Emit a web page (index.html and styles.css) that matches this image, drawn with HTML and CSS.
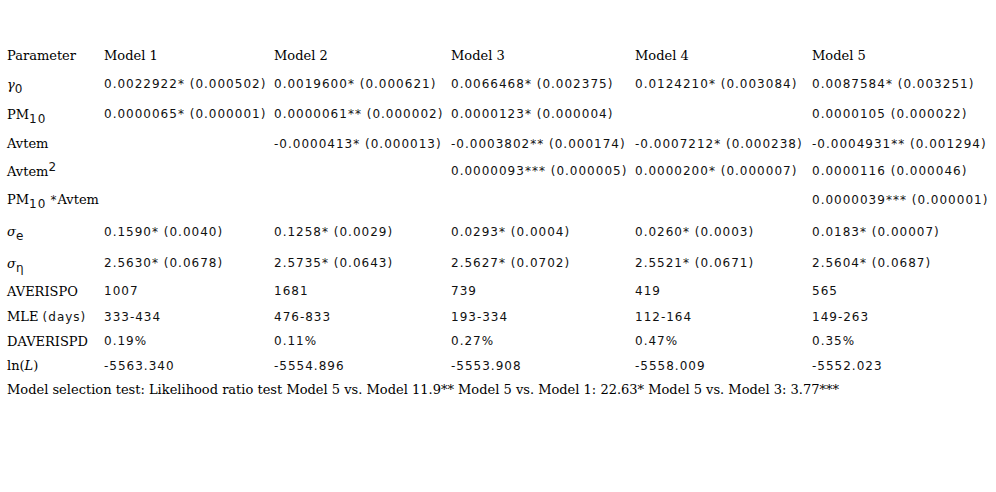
FILE: index.html
```html
<!DOCTYPE html>
<html>
<head>
<meta charset="utf-8">
<link rel="stylesheet" href="styles.css">
</head>
<body>
<table class="results">
  <colgroup>
    <col class="c0"><col class="c1"><col class="c2"><col class="c3"><col class="c4"><col class="c5">
  </colgroup>
  <tr class="r0"><td class="lbl">Parameter</td><td class="lbl">Model 1</td><td class="lbl">Model 2</td><td class="lbl">Model 3</td><td class="lbl">Model 4</td><td class="lbl">Model 5</td></tr>
  <tr class="r1"><td class="lbl"><span class="greek">γ</span><sub class="num">0</sub></td><td class="num">0.0022922* (0.000502)</td><td class="num">0.0019600* (0.000621)</td><td class="num">0.0066468* (0.002375)</td><td class="num">0.0124210* (0.003084)</td><td class="num">0.0087584* (0.003251)</td></tr>
  <tr class="r2"><td class="lbl">PM<sub class="num">10</sub></td><td class="num">0.0000065* (0.000001)</td><td class="num">0.0000061** (0.000002)</td><td class="num">0.0000123* (0.000004)</td><td class="num"></td><td class="num">0.0000105 (0.000022)</td></tr>
  <tr class="r3"><td class="lbl">Avtem</td><td class="num"></td><td class="num">-0.0000413* (0.000013)</td><td class="num">-0.0003802** (0.000174)</td><td class="num">-0.0007212* (0.000238)</td><td class="num">-0.0004931** (0.001294)</td></tr>
  <tr class="r4"><td class="lbl">Avtem<sup class="num">2</sup></td><td class="num"></td><td class="num"></td><td class="num">0.0000093*** (0.000005)</td><td class="num">0.0000200* (0.000007)</td><td class="num">0.0000116 (0.000046)</td></tr>
  <tr class="r5"><td class="lbl">PM<sub class="num">10</sub> <span class="num">*</span>Avtem</td><td class="num"></td><td class="num"></td><td class="num"></td><td class="num"></td><td class="num">0.0000039*** (0.000001)</td></tr>
  <tr class="r6"><td class="lbl"><span class="greek">σ</span><sub class="num">e</sub></td><td class="num">0.1590* (0.0040)</td><td class="num">0.1258* (0.0029)</td><td class="num">0.0293* (0.0004)</td><td class="num">0.0260* (0.0003)</td><td class="num">0.0183* (0.00007)</td></tr>
  <tr class="r7"><td class="lbl"><span class="greek">σ</span><sub class="num">η</sub></td><td class="num">2.5630* (0.0678)</td><td class="num">2.5735* (0.0643)</td><td class="num">2.5627* (0.0702)</td><td class="num">2.5521* (0.0671)</td><td class="num">2.5604* (0.0687)</td></tr>
  <tr class="r8"><td class="lbl">AVERISPO</td><td class="num">1007</td><td class="num">1681</td><td class="num">739</td><td class="num">419</td><td class="num">565</td></tr>
  <tr class="r9"><td class="lbl">MLE <span class="num">(days)</span></td><td class="num">333-434</td><td class="num">476-833</td><td class="num">193-334</td><td class="num">112-164</td><td class="num">149-263</td></tr>
  <tr class="r10"><td class="lbl">DAVERISPD</td><td class="num">0.19%</td><td class="num">0.11%</td><td class="num">0.27%</td><td class="num">0.47%</td><td class="num">0.35%</td></tr>
  <tr class="r11"><td class="lbl">ln(<i>L</i>)</td><td class="num">-5563.340</td><td class="num">-5554.896</td><td class="num">-5553.908</td><td class="num">-5558.009</td><td class="num">-5552.023</td></tr>
</table>
<p class="note">Model selection test: Likelihood ratio test Model 5 vs. Model 11.9** Model 5 vs. Model 1: 22.63* Model 5 vs. Model 3: 3.77***</p>
</body>
</html>
```
FILE: styles.css
```css
html, body {
  margin: 0;
  padding: 0;
  background: #ffffff;
  color: #000000;
}
body {
  padding: 41px 0 0 7px;
  font-family: "DejaVu Serif", serif;
  font-size: 13px;
}
.results {
  border-collapse: collapse;
  border-spacing: 0;
  table-layout: fixed;
}
.results td {
  padding: 0;
  vertical-align: middle;
  white-space: nowrap;
  text-align: left;
}
.c0 { width: 97px; }
.c1 { width: 170px; }
.c2 { width: 177px; }
.c3 { width: 184px; }
.c4 { width: 177px; }
.c5 { width: 180px; }
.lbl {
  font-family: "DejaVu Serif", serif;
  font-size: 13px;
  letter-spacing: 0;
}
.num {
  font-family: "DejaVu Sans", sans-serif;
  font-size: 12px;
  letter-spacing: 1px;
  color: #111111;
}
.lbl sub, .lbl sup {
  font-size: 12px;
  line-height: 0;
}
.greek {
  font-family: "DejaVu Serif", serif;
  font-style: italic;
}
.r0 { height: 28px; }
.r1 { height: 30px; }
.r2 { height: 30px; }
.r3 { height: 29px; }
.r4 { height: 26px; }
.r5 { height: 31px; }
.r6 { height: 33px; }
.r7 { height: 30px; }
.r8 { height: 26px; }
.r9 { height: 25px; }
.r10 { height: 24px; }
.r11 { height: 25px; }
.note {
  margin: 4px 0 0;
  font-family: "DejaVu Serif", serif;
  font-size: 13px;
}
```
